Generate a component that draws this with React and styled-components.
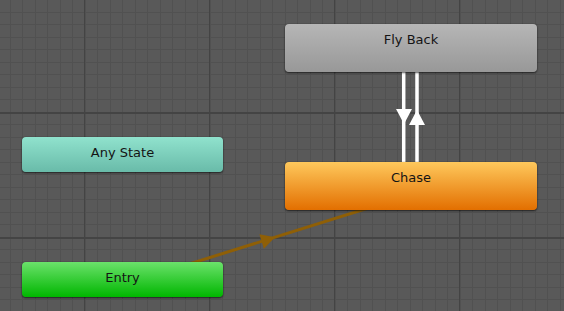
import React from "react";
import styled, { createGlobalStyle } from "styled-components";

const Global = createGlobalStyle`
  html, body { margin: 0; padding: 0; background: #595959; overflow: hidden; }
  #root { width: 564px; height: 311px; }
`;

const Canvas = styled.div`
  position: relative;
  width: 564px;
  height: 311px;
  background: #595959;
  overflow: hidden;
  font-family: "DejaVu Sans", Verdana, sans-serif;
`;

const Layer = styled.svg`
  position: absolute;
  left: 0;
  top: 0;
  width: 564px;
  height: 311px;
  pointer-events: none;
`;

const palettes = {
  gray: ["#b6b6b6", "#989898"],
  orange: ["#fec85c", "#e36f00"],
  teal: ["#90e2cd", "#69bba9"],
  green: ["#6be26b", "#00b600"],
};

const Node = styled.div`
  position: absolute;
  box-sizing: border-box;
  left: ${(p) => p.x}px;
  top: ${(p) => p.y}px;
  width: ${(p) => p.w}px;
  height: ${(p) => p.h}px;
  border-radius: 4px;
  background: linear-gradient(${(p) => palettes[p.tone][0]}, ${(p) => palettes[p.tone][1]});
  box-shadow: 0 1px 2px rgba(0, 0, 0, 0.6), 0 0 1px rgba(0, 0, 0, 0.5);
  color: #141414;
  font-size: 13px;
  line-height: 32px;
  text-align: center;
  white-space: nowrap;
`;

const W = 564;
const H = 311;

function Grid() {
  const minorX = [];
  for (let k = -7; k <= 40; k++) {
    const x = Math.round(84.6 + 12.5 * k);
    if (x >= 0 && x < W) minorX.push(x);
  }
  const minorY = [];
  for (let k = -9; k <= 20; k++) {
    const y = Math.round(111.7 + 12.5 * k);
    if (y >= 0 && y < H) minorY.push(y);
  }
  const majorX = [84, 209, 334, 459];
  const majorY = [112, 237];
  return (
    <g shapeRendering="crispEdges">
      {minorX.map((x) => (
        <rect key={"mx" + x} x={x} y={0} width={1} height={H} fill="#515151" />
      ))}
      {minorY.map((y) => (
        <rect key={"my" + y} x={0} y={y} width={W} height={1} fill="#515151" />
      ))}
      {majorX.map((x) => (
        <rect key={"Mx" + x} x={x} y={0} width={1} height={H} fill="#444444" />
      ))}
      {majorY.map((y) => (
        <rect key={"My" + y} x={0} y={y} width={W} height={2} fill="#444444" />
      ))}
    </g>
  );
}

function Transitions() {
  // Entry -> Chase
  const tip = [275, 237.3];
  const d = [0.954, -0.299];
  const p = [0.299, 0.954];
  const L = 14;
  const hw = 7.5;
  const base = [tip[0] - L * d[0], tip[1] - L * d[1]];
  const c1 = [base[0] + hw * p[0], base[1] + hw * p[1]];
  const c2 = [base[0] - hw * p[0], base[1] - hw * p[1]];
  return (
    <g>
      <line x1={122} y1={285} x2={410} y2={195} stroke="#8f5f06" strokeWidth={3} />
      <polygon
        points={`${tip[0]},${tip[1]} ${c1[0]},${c1[1]} ${c2[0]},${c2[1]}`}
        fill="#8f5f06"
      />
      <line x1={403.7} y1={70} x2={403.7} y2={164} stroke="#ffffff" strokeWidth={3.5} />
      <line x1={417} y1={70} x2={417} y2={164} stroke="#ffffff" strokeWidth={3.5} />
      <polygon points="396,109 412,109 404,124" fill="#ffffff" />
      <polygon points="409,125 425,125 417,110" fill="#ffffff" />
    </g>
  );
}

export default function App() {
  return (
    <>
      <Global />
      <Canvas>
        <Layer viewBox={`0 0 ${W} ${H}`}>
          <Grid />
          <Transitions />
        </Layer>
        <Node tone="gray" x={285} y={24} w={252} h={48}>Fly Back</Node>
        <Node tone="orange" x={285} y={162} w={252} h={48}>Chase</Node>
        <Node tone="teal" x={22} y={137} w={201} h={35}>Any State</Node>
        <Node tone="green" x={22} y={262} w={201} h={35}>Entry</Node>
      </Canvas>
    </>
  );
}
